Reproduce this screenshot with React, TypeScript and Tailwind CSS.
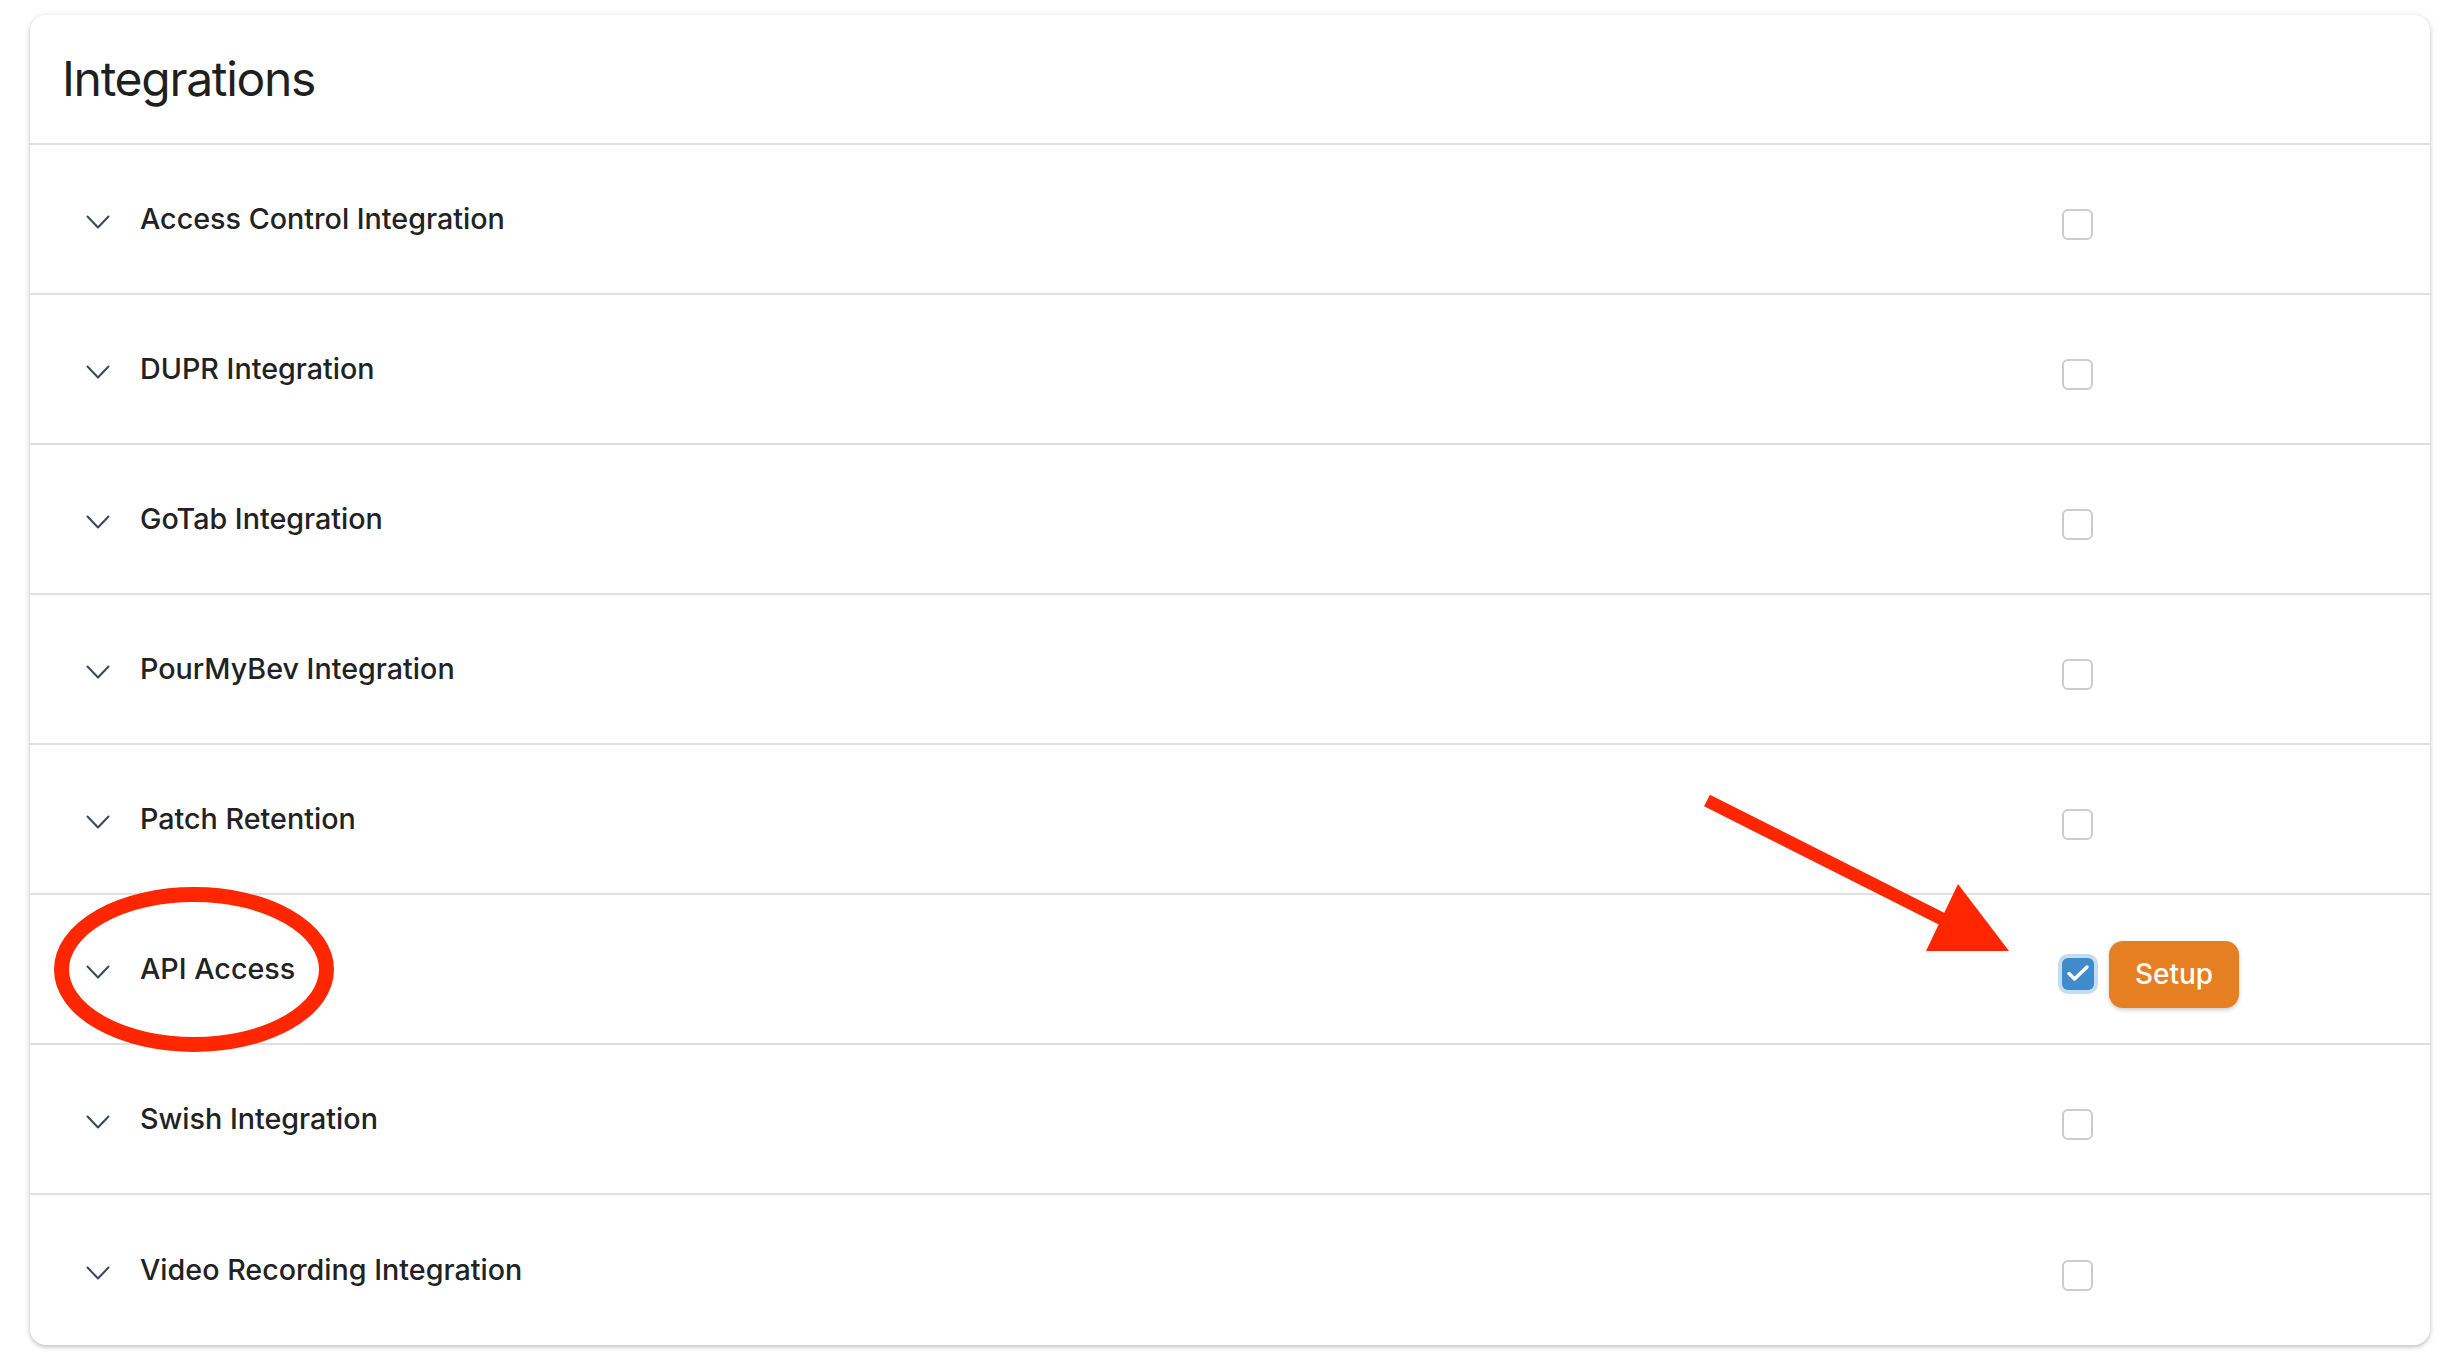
import React from "react";

const integrations = [
  { name: "Access Control Integration", enabled: false },
  { name: "DUPR Integration", enabled: false },
  { name: "GoTab Integration", enabled: false },
  { name: "PourMyBev Integration", enabled: false },
  { name: "Patch Retention", enabled: false },
  { name: "API Access", enabled: true },
  { name: "Swish Integration", enabled: false },
  { name: "Video Recording Integration", enabled: false },
];

function Chevron() {
  return (
    <svg width="24" height="14" viewBox="0 0 24 14" fill="none" className="mt-[5px] shrink-0">
      <path d="M1.5 1.5 12 12.5 22.5 1.5" stroke="#34495e" strokeWidth="2" strokeLinecap="round" strokeLinejoin="round" />
    </svg>
  );
}

function Checkbox({ checked }: { checked: boolean }) {
  if (!checked) {
    return <span className="block h-[31px] w-[31px] rounded-[6px] border-2 border-[#cccccc] bg-white" />;
  }
  return (
    <span className="flex h-[32px] w-[32px] items-center justify-center rounded-[6px] bg-[#428bca] ring-[4px] ring-[#c6dcf0]">
      <svg width="32" height="32" viewBox="0 0 32 32" fill="none">
        <path d="M7 15.5 12.5 21 25 9" stroke="#fff" strokeWidth="3.5" strokeLinecap="round" strokeLinejoin="round" />
      </svg>
    </span>
  );
}

function Row({ name, enabled, last }: { name: string; enabled: boolean; last: boolean }) {
  return (
    <div className={`flex h-[150px] items-center pl-[56px] ${last ? "" : "border-b-2 border-[#e0e0e0]"}`}>
      <Chevron />
      <span className="ml-[30px] flex-1 text-[28.7px] font-medium text-[#222222]">{name}</span>
      <div className="mt-[10px] flex w-[368px] items-center gap-[15px]">
        <Checkbox checked={enabled} />
        {enabled && (
          <button className="h-[67px] w-[130px] rounded-[14px] bg-[#e67e22] text-[28px] font-medium text-white shadow-[0_2px_4px_rgba(0,0,0,0.2)]">
            Setup
          </button>
        )}
      </div>
    </div>
  );
}

export default function App() {
  return (
    <main className="relative min-h-screen w-full bg-white pl-[30px] pt-[15px]" style={{ fontFamily: "Inter, 'Noto Sans', sans-serif" }}>
      <section className="w-[2400px] rounded-[16px] bg-white shadow-[0_2px_4px_rgba(0,0,0,0.22),0_0_10px_rgba(0,0,0,0.06)]">
        <header className="flex h-[130px] items-center border-b-2 border-[#e0e0e0] pl-[32px]">
          <h1 className="text-[48px] font-normal leading-none tracking-[-1.3px] text-[#1f1f1f]">Integrations</h1>
        </header>
        {integrations.map((item, i) => (
          <Row key={item.name} name={item.name} enabled={item.enabled} last={i === integrations.length - 1} />
        ))}
      </section>

      {/* annotation overlay */}
      <svg className="pointer-events-none absolute left-0 top-0" width="2452" height="1366">
        <ellipse cx="194" cy="969.5" rx="132.5" ry="75" fill="none" stroke="#ff2600" strokeWidth="15" />
        <line x1="1707" y1="800.5" x2="1962" y2="929" stroke="#ff2600" strokeWidth="13" />
        <polygon points="1958,884 2009,951 1926,951" fill="#ff2600" />
      </svg>
    </main>
  );
}
